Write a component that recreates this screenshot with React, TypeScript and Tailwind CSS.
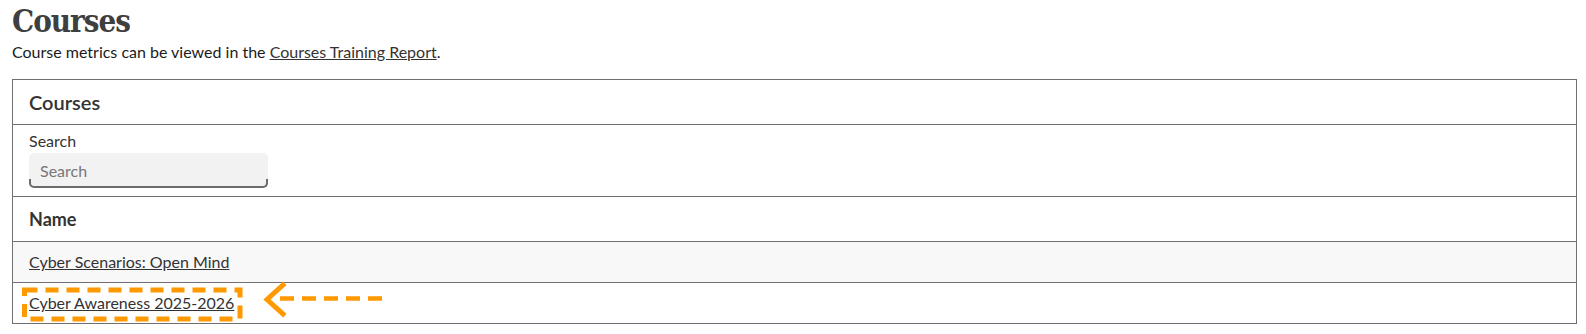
export default function App() {
  return (
    <div className="relative min-h-[334px] bg-white pl-[12px] pr-[9px] font-['Lato',sans-serif] text-[#1b1b1b]">
      <h1 className="pt-[2px] text-[31px] leading-[38px] font-bold text-[#3f3f3f] font-['DejaVu_Serif_Condensed','DejaVu_Serif',serif] tracking-[-1px]">
        Courses
      </h1>
      <p className="mt-[2px] text-[16px] leading-[19px]">
        Course metrics can be viewed in the{" "}
        <a href="#" className="underline text-[#333]">
          Courses Training Report
        </a>
        .
      </p>

      <div className="mt-[18px] border border-[#707070]">
        <div className="flex h-[45px] items-center border-b border-[#707070] px-[16px]">
          <h2 className="text-[20px] font-semibold text-[#333]">Courses</h2>
        </div>

        <div className="border-b border-[#707070] px-[16px] pt-[6px] pb-[8px]">
          <label className="block text-[16px] leading-[19px] text-[#333]">Search</label>
          <div className="relative mt-[3px] w-[239px]">
            <input
              type="text"
              placeholder="Search"
              className="block h-[35px] w-full rounded-[5px] bg-[#f2f2f2] px-[11px] text-[16px] placeholder:text-[#777] outline-none"
            />
            <span className="pointer-events-none absolute inset-x-0 bottom-0 h-[9px] rounded-b-[5px] border-x-2 border-b-2 border-[#6b6b6b]" />
          </div>
        </div>

        <div className="flex h-[45px] items-center border-b border-[#707070] px-[16px]">
          <span className="text-[18px] font-bold text-[#333]">Name</span>
        </div>

        <div className="flex h-[41px] items-center border-b border-[#707070] bg-[#f8f8f8] px-[16px]">
          <a href="#" className="text-[16px] text-[#333] underline">
            Cyber Scenarios: Open Mind
          </a>
        </div>
        <div className="flex h-[40px] items-center px-[16px]">
          <a href="#" className="text-[16px] text-[#333] underline">
            Cyber Awareness 2025-2026
          </a>
        </div>
      </div>

      <svg
        className="pointer-events-none absolute left-0 top-0"
        width="420"
        height="334"
        viewBox="0 0 420 334"
        fill="none"
      >
        <rect
          x="24.5"
          y="290"
          width="215.5"
          height="29"
          stroke="#ff9900"
          strokeWidth="5"
          strokeDasharray="13 8"
        />
        <path d="M283 285 L267 299.5 L283 314" stroke="#ff9900" strokeWidth="5" strokeLinecap="square" />
        <path d="M280 298.5 L385 298.5" stroke="#ff9900" strokeWidth="4.5" strokeDasharray="14 8" />
      </svg>
    </div>
  );
}
